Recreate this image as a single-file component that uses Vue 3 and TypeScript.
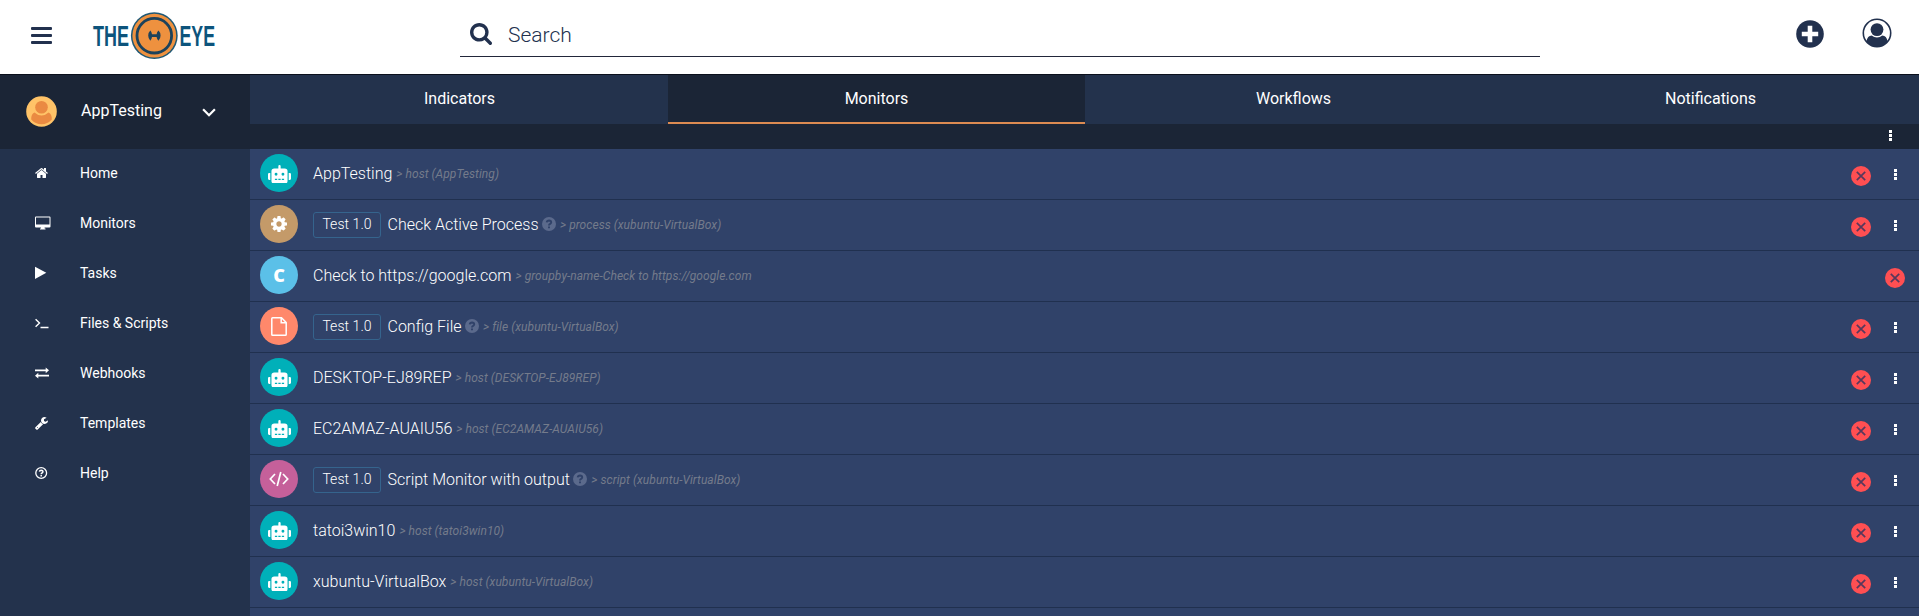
<script setup lang="ts">
type Kind = 'host' | 'process' | 'group' | 'file' | 'script'
interface Monitor {
  name: string
  meta: string
  kind: Kind
  tag?: string
  help?: boolean
}

const menu = ['Home', 'Monitors', 'Tasks', 'Files & Scripts', 'Webhooks', 'Templates', 'Help']
const tabs = ['Indicators', 'Monitors', 'Workflows', 'Notifications']
const activeTab = 'Monitors'

const monitors: Monitor[] = [
  { name: 'AppTesting', meta: '> host (AppTesting)', kind: 'host' },
  { name: 'Check Active Process', meta: '> process (xubuntu-VirtualBox)', kind: 'process', tag: 'Test 1.0', help: true },
  { name: 'Check to https://google.com', meta: '> groupby-name-Check to https://google.com', kind: 'group' },
  { name: 'Config File', meta: '> file (xubuntu-VirtualBox)', kind: 'file', tag: 'Test 1.0', help: true },
  { name: 'DESKTOP-EJ89REP', meta: '> host (DESKTOP-EJ89REP)', kind: 'host' },
  { name: 'EC2AMAZ-AUAIU56', meta: '> host (EC2AMAZ-AUAIU56)', kind: 'host' },
  { name: 'Script Monitor with output', meta: '> script (xubuntu-VirtualBox)', kind: 'script', tag: 'Test 1.0', help: true },
  { name: 'tatoi3win10', meta: '> host (tatoi3win10)', kind: 'host' },
  { name: 'xubuntu-VirtualBox', meta: '> host (xubuntu-VirtualBox)', kind: 'host' },
]
</script>

<template>
  <div class="app">
    <header class="header">
      <div class="burger"><i></i><i></i><i></i></div>
      <svg class="logo" width="132" height="48" viewBox="0 0 132 48">
        <g class="logo-text">
          <text x="1" y="33.6" textLength="36" lengthAdjust="spacingAndGlyphs">THE</text>
          <text x="87.5" y="33.6" textLength="35.5" lengthAdjust="spacingAndGlyphs">EYE</text>
        </g>
        <circle cx="62.3" cy="23.7" r="23.4" fill="#1f5875" />
        <circle cx="62.3" cy="23.7" r="21.9" fill="#ee913f" />
        <circle cx="62.3" cy="23.7" r="17.3" fill="none" stroke="#1c425b" stroke-width="2.8" />
        <path d="M58.3 18.5Q59.6 19.5 60 22.2H64.6Q65 19.5 66.5 18.5Q68.6 20.5 68.6 23.6Q68.6 26.7 66.5 28.7Q65 27.6 64.6 25H60Q59.6 27.6 58.3 28.7Q56.2 26.7 56.2 23.6Q56.2 20.5 58.3 18.5Z" fill="#1c425b" />
      </svg>
      <div class="search">
        <svg width="22" height="22" viewBox="64 128 1664 1664"><path fill="#22314e" d="M1216 832q0-185-131.5-316.5t-316.5-131.5-316.5 131.5-131.5 316.5 131.5 316.5 316.5 131.5 316.5-131.5 131.5-316.5zm512 832q0 52-38 90t-90 38q-54 0-90-38l-343-342q-179 124-399 124-143 0-273.5-55.5t-225-150-150-225-55.5-273.5 55.5-273.5 150-225 225-150 273.5-55.5 273.5 55.5 225 150 150 225 55.5 273.5q0 220-124 399l343 343q37 37 37 90z" /></svg>
        <span>Search</span>
      </div>
      <svg class="add" width="28" height="28" viewBox="0 0 28 28">
        <circle cx="14" cy="14" r="13.8" fill="#22314e" />
        <path d="M14 5.8V22.2M5.8 14H22.2" stroke="#fff" stroke-width="4.6" stroke-linejoin="round" />
      </svg>
      <svg class="user" width="30" height="30" viewBox="0 0 30 30">
        <circle cx="15" cy="15" r="13.7" fill="#fff" stroke="#22314e" stroke-width="1.6" />
        <circle cx="15" cy="11.6" r="6.4" fill="#22314e" />
        <path d="M4.3 23.5Q5.5 17.5 9.7 17.4Q12 19.4 15 19.4Q18 19.4 20.3 17.4Q24.5 17.5 25.7 23.5Q21 29 15 29Q9 29 4.3 23.5Z" fill="#22314e" />
      </svg>
    </header>

    <div class="body">
      <aside class="sidebar">
        <div class="account">
          <svg width="31" height="31" viewBox="0 0 31 31">
            <circle cx="15.5" cy="15.5" r="15.3" fill="#ffc368" />
            <circle cx="15.5" cy="11.2" r="6.3" fill="#ea8a42" />
            <path d="M5.2 23.5Q5 18.3 8.5 16.6Q11.5 19.5 15.5 19.5Q19.5 19.5 22.5 16.6Q26 18.3 25.8 23.5Q21.5 28.3 15.5 28.3Q9.5 28.3 5.2 23.5Z" fill="#ea8a42" />
          </svg>
          <span class="account-name">AppTesting</span>
          <svg class="chevron" width="14" height="9" viewBox="0 0 14 9"><path d="M1.1 1.2L7 7.2L12.9 1.2" fill="none" stroke="#fff" stroke-width="2.2" /></svg>
        </div>
        <nav>
          <a v-for="item in menu" :key="item" class="item">
            <span class="item-icon">
              <svg v-if="item === 'Home'" width="14" height="14" viewBox="64 0 1792 1792"><path fill="#fff" d="M1472 992v480q0 26-19 45t-45 19h-384v-384h-256v384h-384q-26 0-45-19t-19-45v-480q0-1 .5-3t.5-3l575-474 575 474q1 2 1 6zm223-69l-62 74q-8 9-21 11h-3q-13 0-21-7l-692-577-692 577q-12 8-24 7-13-2-21-11l-62-74q-8-10-7-23.5t11-21.5l719-599q32-26 76-26t76 26l244 204v-195q0-14 9-23t23-9h192q14 0 23 9t9 23v408l219 182q10 8 11 21.5t-7 23.5z" /></svg>
              <svg v-else-if="item === 'Monitors'" width="16" height="14" viewBox="0 0 16 14"><path fill="#fff" fill-rule="evenodd" d="M1 .5H14.5Q15.5.5 15.5 1.5V10.5Q15.5 11.5 14.5 11.5H9.6V12.5H10.5V13.5H5V12.5H5.9V11.5H1Q0 11.5 0 10.5V1.5Q0 .5 1 .5ZM1 1.5V8.5H14.5V1.5Z" /></svg>
              <svg v-else-if="item === 'Tasks'" width="12" height="14" viewBox="0 0 12 14"><path fill="#fff" d="M0 .8L11.3 6.8L0 13Z" /></svg>
              <svg v-else-if="item === 'Files & Scripts'" width="14" height="14" viewBox="0 0 14 14"><path fill="none" stroke="#fff" stroke-width="1.4" d="M.6 3.2L4.5 7L.6 10.8M5.5 11.5H13.5" /></svg>
              <svg v-else-if="item === 'Webhooks'" width="14" height="14" viewBox="0 0 14 14"><path fill="#fff" d="M0 3.4H10.7V1.4L14 4.3L10.7 7.2V5.2H0ZM14 8.7H3.3V6.8L0 9.7L3.3 12.5V10.5H14Z" /></svg>
              <svg v-else-if="item === 'Templates'" width="14" height="14" viewBox="64 0 1792 1792"><path fill="#fff" d="M448 1472q0-26-19-45t-45-19-45 19-19 45 19 45 45 19 45-19 19-45zm644-420l-682 682q-37 37-90 37-52 0-91-37l-106-108q-38-36-38-90 0-53 38-91l681-681q39 98 114.5 173.5t173.5 114.5zm634-435q0 39-23 106-47 134-164.5 217.5t-258.5 83.5q-185 0-316.5-131.5t-131.5-316.5 131.5-316.5 316.5-131.5q58 0 121.5 16.5t107.5 46.5q16 11 16 28t-16 28l-293 169v224l193 107q5-3 79-48.5t135.5-81 70.5-35.5q15 0 23.5 10t8.5 25z" /></svg>
              <svg v-else width="14" height="14" viewBox="0 0 14 14"><circle cx="6.2" cy="7" r="5.4" fill="none" stroke="#fff" stroke-width="1.3" /><path d="M4.4 5.7Q4.7 4.3 6.2 4.3Q8 4.4 8 5.7Q7.9 6.5 7 7Q6.2 7.4 6.2 8.2M6.2 8.9V10.4" fill="none" stroke="#fff" stroke-width="1.5" /></svg>
            </span>
            <span>{{ item }}</span>
          </a>
        </nav>
      </aside>

      <main class="main">
        <div class="tabs">
          <div v-for="tab in tabs" :key="tab" class="tab" :class="{ active: tab === activeTab }">{{ tab }}</div>
        </div>
        <div class="toolbar"><span class="dots"><i></i><i></i><i></i></span></div>
        <section class="list">
          <div v-for="m in monitors" :key="m.name" class="row">
            <div class="badge" :class="m.kind">
              <svg v-if="m.kind === 'host'" class="robot" width="23" height="18.4" viewBox="0 0 640 512"><path fill="#fff" d="M32,224H64V416H32A31.96,31.96,0,0,1,0,384V256A31.96,31.96,0,0,1,32,224Zm512-48V448a64.06,64.06,0,0,1-64,64H160a64.06,64.06,0,0,1-64-64V176a79.97,79.97,0,0,1,80-80H288V32a32,32,0,0,1,64,0V96H464A79.97,79.97,0,0,1,544,176ZM264,256a40,40,0,1,0-40,40A39.997,39.997,0,0,0,264,256Zm-8,128H192v32h64Zm96,0H288v32h64ZM456,256a40,40,0,1,0-40,40A39.997,39.997,0,0,0,456,256Zm-8,128H384v32h64ZM640,256V384a31.96,31.96,0,0,1-32,32H576V224h32A31.96,31.96,0,0,1,640,256Z" /></svg>
              <svg v-else-if="m.kind === 'process'" width="16" height="16" viewBox="128 128 1536 1536"><path fill="#fff" d="M1152 896q0-106-75-181t-181-75-181 75-75 181 75 181 181 75 181-75 75-181zm512-109v222q0 12-8 23t-20 13l-185 28q-19 54-39 91 35 50 107 138 10 12 10 25t-9 23q-27 37-99 108t-94 71q-12 0-26-9l-138-108q-44 23-91 38-16 136-29 186-7 28-36 28h-222q-14 0-24.5-8.5t-11.5-21.5l-28-184q-49-16-90-37l-141 107q-10 9-25 9-14 0-25-11-126-114-165-168-7-10-7-23 0-12 8-23 15-21 51-66.5t54-70.5q-27-50-41-99l-183-27q-13-2-21-12.5t-8-23.5v-222q0-12 8-23t19-13l186-28q14-46 39-92-40-57-107-138-10-12-10-24 0-10 9-23 26-36 98.5-107.5t94.5-71.5q13 0 26 10l138 107q44-23 91-38 16-136 29-186 7-28 36-28h222q14 0 24.5 8.5t11.5 21.5l28 184q49 16 90 37l142-107q9-9 24-9 13 0 25 10 129 119 165 170 7 8 7 22 0 12-8 23-15 21-51 66.5t-54 70.5q26 50 41 98l183 28q13 2 21 12.5t8 23.5z" /></svg>
              <span v-else-if="m.kind === 'group'">C</span>
              <svg v-else-if="m.kind === 'file'" width="16" height="19" viewBox="0 0 16 19"><path d="M.8 1.6Q.8.8 1.6.8H10.5L15.2 5.5V17.4Q15.2 18.2 14.4 18.2H1.6Q.8 18.2.8 17.4ZM10.2.8V5.8H15.2" fill="none" stroke="#fff" stroke-width="1.5" /></svg>
              <svg v-else width="20" height="16" viewBox="0 0 20 16"><path d="M6 3L1.3 8L6 13M14 3L18.7 8L14 13M11.8 1L8.2 15" fill="none" stroke="#fff" stroke-width="1.7" /></svg>
            </div>
            <div class="text">
              <span v-if="m.tag" class="tag">{{ m.tag }}</span>
              <span class="name">{{ m.name }}</span>
              <svg v-if="m.help" class="help" width="14" height="14" viewBox="0 0 14 14"><circle cx="7" cy="7" r="7" fill="#5b6a8c" /><path d="M4.7 5.4Q5 3.5 7 3.5Q9.2 3.6 9.2 5.3Q9.1 6.3 8.1 6.9Q7 7.5 7 8.5M7 9.4V11.2" fill="none" stroke="#304269" stroke-width="1.9" /></svg>
              <span class="meta">{{ m.meta }}</span>
            </div>
            <svg class="fail" width="20" height="20" viewBox="0 0 20 20"><circle cx="10" cy="10" r="10" fill="#ff4f52" /><path d="M5.8 5.8L14.2 14.2M14.2 5.8L5.8 14.2" stroke="#58385c" stroke-width="1.7" /></svg>
            <span v-if="m.kind !== 'group'" class="dots"><i></i><i></i><i></i></span>
          </div>
        </section>
      </main>
    </div>
  </div>
</template>

<style>
body {
  margin: 0;
  overflow: hidden;
}
</style>

<style scoped>
.app {
  height: 616px;
  display: flex;
  flex-direction: column;
  overflow: hidden;
  font-family: Roboto, "Liberation Sans", sans-serif;
  color: #fff;
}
.header {
  flex: none;
  box-sizing: border-box;
  height: 75px;
  display: flex;
  align-items: flex-start;
  background: #fff;
  border-bottom: 1px solid #0b101c;
}
.burger {
  margin: 27px 0 0 31px;
  width: 21px;
  display: flex;
  flex-direction: column;
  gap: 4px;
}
.burger i {
  height: 3px;
  border-radius: 1px;
  background: #22314e;
}
.logo {
  margin: 12px 0 0 40px;
  overflow: visible;
}
.logo-text {
  font: bold 30px "Liberation Sans", sans-serif;
  fill: #0d547c;
}
.search {
  box-sizing: border-box;
  width: 1080px;
  height: 57px;
  margin-left: 236px;
  padding-left: 10px;
  display: flex;
  border-bottom: 1px solid #22273a;
}
.search svg {
  margin-top: 23px;
}
.search span {
  margin: 23px 0 0 16px;
  font-size: 21px;
  font-weight: 300;
  line-height: 24px;
  color: #22314e;
}
.add {
  margin: 20px 0 0 256px;
}
.user {
  margin: 18px 0 0 37.5px;
}
.body {
  flex: 1;
  min-height: 0;
  display: flex;
}
.sidebar {
  width: 250px;
  flex: none;
  background: #23324c;
}
.account {
  box-sizing: border-box;
  height: 74px;
  padding: 0 0 2px 25.5px;
  display: flex;
  align-items: center;
  background: #1b2536;
}
.account > svg {
  flex: none;
}
.account-name {
  width: 121px;
  margin: 0 0 1px 24.5px;
  font-size: 16px;
}
.chevron {
  margin-top: 2px;
}
.item {
  height: 50px;
  margin-top: -1px;
  margin-bottom: 1px;
  padding-left: 35px;
  display: flex;
  align-items: center;
  font-size: 14px;
}
.item-icon {
  width: 45px;
  height: 14px;
}
.item-icon svg {
  display: block;
}
.main {
  flex: 1;
  min-width: 0;
  display: flex;
  flex-direction: column;
  background: #304269;
}
.tabs {
  flex: none;
  height: 49px;
  padding-left: 1px;
  display: grid;
  grid-template-columns: repeat(4, 1fr);
  background: #23324c;
}
.tab {
  box-sizing: border-box;
  text-align: center;
  font-size: 16px;
  line-height: 47px;
}
.tab.active {
  background: #1b2536;
  border-bottom: 3px solid #dc8b52;
}
.toolbar {
  flex: none;
  box-sizing: border-box;
  height: 25px;
  display: flex;
  justify-content: flex-end;
  padding: 6px 27px 0 0;
  background: #1b2536;
}
.dots {
  display: flex;
  flex-direction: column;
  gap: 1px;
}
.dots i {
  width: 3px;
  height: 3px;
  background: #fff;
}
.row {
  box-sizing: border-box;
  height: 51px;
  padding: 0 22px 0 10px;
  display: flex;
  align-items: flex-start;
  border-bottom: 1px solid #20304f;
}
.badge {
  width: 38px;
  height: 38px;
  margin-top: 5px;
  border-radius: 50%;
  display: flex;
  align-items: center;
  justify-content: center;
  font: 800 18px "Open Sans", sans-serif;
}
.robot {
  margin: 2px 0 0 1px;
}
.host { background: #00b0b9; }
.process { background: #c49a69; }
.group { background: #5bc0e8; }
.file { background: #ff886b; }
.script { background: #c5609a; }
.text {
  flex: 1;
  height: 48px;
  margin-left: 15px;
  display: flex;
  align-items: center;
  white-space: nowrap;
}
.tag {
  box-sizing: border-box;
  width: 68px;
  height: 26px;
  margin: 2px 6.5px 0 0;
  border: 1px solid #35648d;
  border-radius: 3px;
  text-align: center;
  font-size: 14px;
  font-weight: 300;
  letter-spacing: 0.05px;
  line-height: 23px;
}
.name {
  font-size: 16px;
  font-weight: 300;
}
.help {
  margin: -1px 0 0 3.5px;
}
.meta {
  margin: 2px 0 0 4px;
  font-size: 12px;
  font-style: italic;
  letter-spacing: 0.05px;
  color: #747b8b;
}
.fail {
  margin-top: 17px;
}
.row .dots {
  margin: 20px 0 0 23px;
}
.row:has(.group) {
  padding-right: 14px;
}
</style>
